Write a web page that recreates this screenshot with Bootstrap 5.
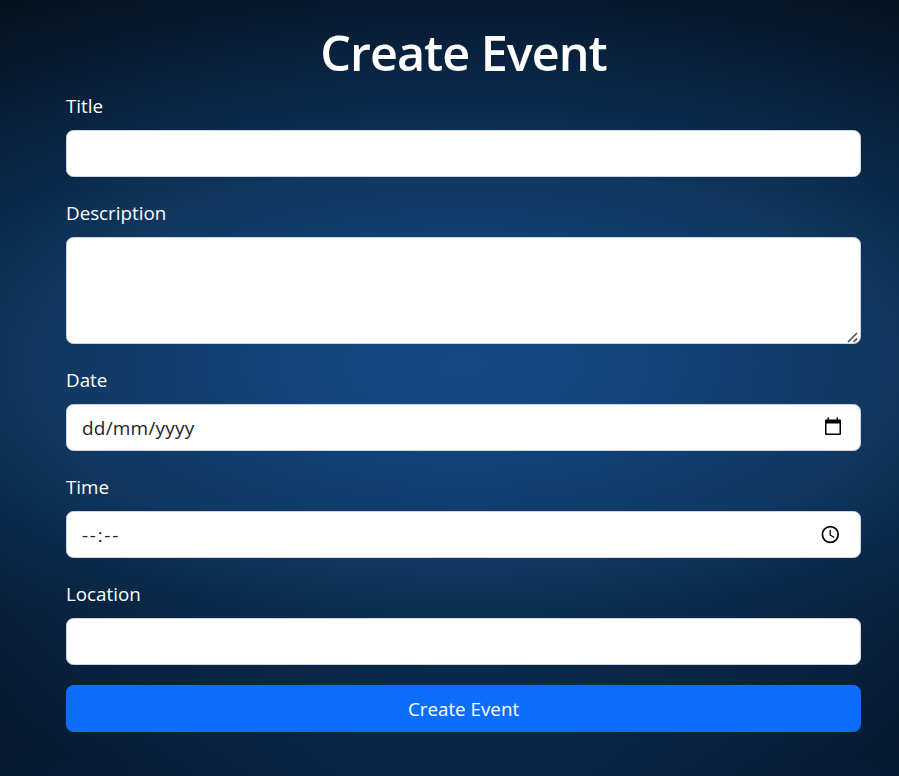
<!DOCTYPE html>
<html lang="en">
<head>
<meta charset="utf-8">
<meta name="viewport" content="width=device-width, initial-scale=1">
<title>Create Event</title>
<link href="https://cdn.jsdelivr.net/npm/bootstrap@5.3.0/dist/css/bootstrap.min.css" rel="stylesheet">
<style>
  html { font-size: 20px; }
  body {
    font-family: "Open Sans", "Noto Sans", sans-serif;
    color: #fff;
    background:
      radial-gradient(ellipse 1000px 200px at 464px 790px, rgba(16,66,128,.42), rgba(16,66,128,0)),
      radial-gradient(ellipse 930px 440px at 464px 365px, #164a86 0%, #124379 20%, #0f3760 46%, #0a2848 62%, #071c33 80%, #03101c 98%);
  }
  .event-form { width: 795px; margin-left: 66px; padding-top: 20px; }
  .event-heading { font-size: 48.5px; line-height: 60px; font-weight: 600; letter-spacing: -1px; padding-top: 1.5px; height: 60px; }
  .form-label, .btn, .form-control { font-size: 18.8px; line-height: 30px; }
  .form-label { display: block; padding-top: 1px; height: 30px; }
  .form-control, .form-control:focus { border-color: #ced4da; border-radius: 7.5px; background: #fff; color: #212529; }
  .picker-field { height: 47px; }
  .btn { border-radius: 7.5px; }
  .description-field { height: 107px; resize: none; }
  .resize-grip { position: absolute; right: 1px; bottom: 0; }
  .date-text { font-size: 19px; letter-spacing: .2px; }
  .time-text { font-size: 19px; letter-spacing: 1.7px; }
</style>
</head>
<body class="min-vh-100 overflow-hidden">
<main class="event-form">
  <h1 class="event-heading text-center mb-2">Create Event</h1>
  <form>
    <div class="mb-3">
      <label class="form-label mb-2" for="title">Title</label>
      <input class="form-control" id="title" type="text">
    </div>
    <div class="mb-3">
      <label class="form-label mb-2" for="description">Description</label>
      <div class="position-relative">
        <textarea class="form-control description-field d-block" id="description" rows="3"></textarea>
        <svg class="resize-grip" width="14" height="14" viewBox="0 0 14 14" fill="none" stroke="#50545a" stroke-width="1.700"><path d="M2 12 11 3M7.500 12l3.700-3.700"/></svg>
      </div>
    </div>
    <div class="mb-3">
      <span class="form-label mb-2">Date</span>
      <div class="form-control picker-field d-flex align-items-center justify-content-between" role="textbox" aria-label="Date">
        <span class="date-text">dd/mm/yyyy</span>
        <svg width="23" height="24" viewBox="0 0 23 24"><path fill="#000" fill-rule="evenodd" d="M5.500 1.500h1.500v2h7.500v-2h1.500v2h2q1 0 1 1v13.500q0 1-1 1H4q-1 0-1-1V4.500q0-1 1-1h1.500ZM4.500 7.500v10h13v-10Z"/></svg>
      </div>
    </div>
    <div class="mb-3">
      <span class="form-label mb-2">Time</span>
      <div class="form-control picker-field d-flex align-items-center justify-content-between" role="textbox" aria-label="Time">
        <span class="time-text">--:--</span>
        <svg width="24" height="22" viewBox="0 0 24 22" fill="none" stroke="#000"><circle cx="9.300" cy="10.500" r="7.900" stroke-width="1.700"/><path d="M9.200 6v5l4 2.500" stroke-width="1.300"/></svg>
      </div>
    </div>
    <div class="mb-3">
      <label class="form-label mb-2" for="location">Location</label>
      <input class="form-control" id="location" type="text">
    </div>
    <button class="btn btn-primary w-100" type="button">Create Event</button>
  </form>
</main>
<script src="https://cdn.jsdelivr.net/npm/bootstrap@5.3.0/dist/js/bootstrap.bundle.min.js"></script>
</body>
</html>
